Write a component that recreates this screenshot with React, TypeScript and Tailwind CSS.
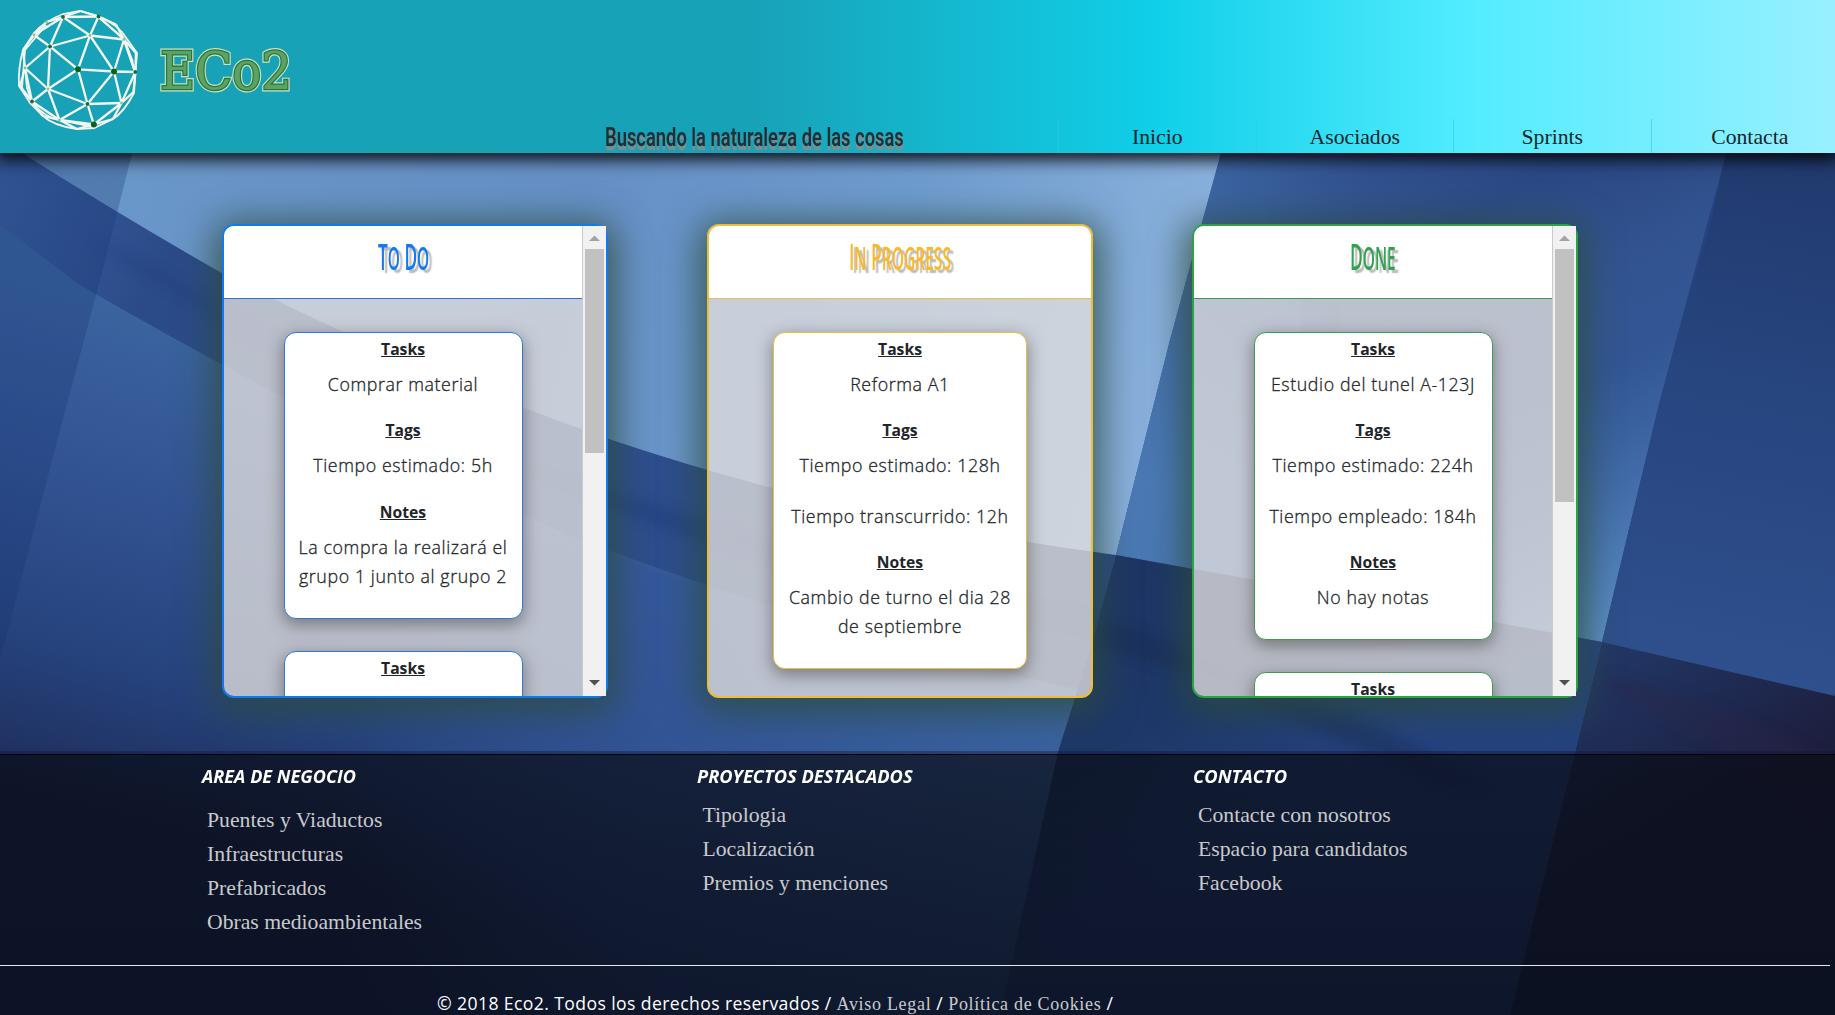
import { useLayoutEffect, useRef, useState } from "react";
import type { ReactNode } from "react";

/* Condenses a run of text horizontally so that it fills a given width. */
function Fit({ width, className = "", children }: { width: number; className?: string; children: ReactNode }) {
  const ref = useRef<HTMLSpanElement>(null);
  const [scale, setScale] = useState(1);
  useLayoutEffect(() => {
    if (ref.current) setScale(width / ref.current.offsetWidth);
  }, [width]);
  return (
    <span className="block overflow-visible" style={{ width }}>
      <span ref={ref} className={`inline-block origin-left whitespace-nowrap ${className}`} style={{ transform: `scaleX(${scale})` }}>
        {children}
      </span>
    </span>
  );
}

function Backdrop() {
  return (
    <svg className="absolute inset-0 h-full w-full" viewBox="0 0 1835 1015" preserveAspectRatio="none" aria-hidden="true">
      <defs>
        <filter id="soft" x="-10%" y="-10%" width="120%" height="120%">
          <feGaussianBlur stdDeviation="6" />
        </filter>
        <linearGradient id="sky" gradientUnits="userSpaceOnUse" x1="100" y1="150" x2="1150" y2="400">
          <stop offset="0" stopColor="#6a97c9" />
          <stop offset=".45" stopColor="#6690c6" />
          <stop offset=".75" stopColor="#6f9ccf" />
          <stop offset="1" stopColor="#89b0dc" />
        </linearGradient>
        <linearGradient id="lowLeft" gradientUnits="userSpaceOnUse" x1="200" y1="330" x2="60" y2="800">
          <stop offset="0" stopColor="#3b649f" />
          <stop offset=".35" stopColor="#325392" />
          <stop offset=".7" stopColor="#26437d" />
          <stop offset="1" stopColor="#1e2c5a" />
        </linearGradient>
        <linearGradient id="lowMid" gradientUnits="userSpaceOnUse" x1="350" y1="0" x2="1080" y2="0">
          <stop offset="0" stopColor="#34599b" stopOpacity="0" />
          <stop offset=".4" stopColor="#33579a" stopOpacity=".75" />
          <stop offset="1" stopColor="#3a639f" />
        </linearGradient>
        <linearGradient id="band" gradientUnits="userSpaceOnUse" x1="0" y1="200" x2="1060" y2="620">
          <stop offset="0" stopColor="#3a5f9f" />
          <stop offset=".15" stopColor="#2b4a88" />
          <stop offset=".6" stopColor="#2d4e8e" />
          <stop offset="1" stopColor="#2a4982" />
        </linearGradient>
        <linearGradient id="pane" gradientUnits="userSpaceOnUse" x1="1180" y1="150" x2="1640" y2="240">
          <stop offset="0" stopColor="#3f69a6" />
          <stop offset=".4" stopColor="#31528f" />
          <stop offset="1" stopColor="#27437f" />
        </linearGradient>
        <linearGradient id="paneGlow" gradientUnits="userSpaceOnUse" x1="1400" y1="250" x2="1600" y2="640">
          <stop offset="0" stopColor="#5d92cb" stopOpacity="0" />
          <stop offset=".45" stopColor="#3d68a9" stopOpacity=".5" />
          <stop offset="1" stopColor="#5c90c8" />
        </linearGradient>
        <linearGradient id="paneLeft" gradientUnits="userSpaceOnUse" x1="1150" y1="200" x2="1150" y2="480">
          <stop offset="0" stopColor="#4f80bb" stopOpacity="0" />
          <stop offset="1" stopColor="#4f80bb" />
        </linearGradient>
        <linearGradient id="right" gradientUnits="userSpaceOnUse" x1="1800" y1="150" x2="1700" y2="680">
          <stop offset="0" stopColor="#213a6e" />
          <stop offset=".45" stopColor="#27457f" />
          <stop offset="1" stopColor="#2f508e" />
        </linearGradient>
        <linearGradient id="deep" gradientUnits="userSpaceOnUse" x1="1150" y1="560" x2="1300" y2="800">
          <stop offset="0" stopColor="#1e3564" />
          <stop offset=".5" stopColor="#1e3869" />
          <stop offset="1" stopColor="#25427e" />
        </linearGradient>
        <linearGradient id="corner" gradientUnits="userSpaceOnUse" x1="1620" y1="640" x2="1720" y2="800">
          <stop offset="0" stopColor="#223766" />
          <stop offset=".5" stopColor="#1f2b53" />
          <stop offset="1" stopColor="#1d1f3f" />
        </linearGradient>
        <linearGradient id="floor" x1="0" y1="754" x2="0" y2="1015" gradientUnits="userSpaceOnUse">
          <stop offset="0" stopColor="#10204a" stopOpacity="0" />
          <stop offset="1" stopColor="#10204a" stopOpacity=".55" />
        </linearGradient>
      </defs>
      <rect width="1835" height="1015" fill="url(#lowLeft)" />
      <path d="M0 225 80 285Q330 430 580 540T1080 690L1000 1015H0Z" fill="url(#lowMid)" />
      <path d="M0 138Q120 215 220 272Q400 365 612 440Q850 520 1116 555L1080 690Q850 640 580 540Q330 430 80 285L0 225Z" fill="url(#band)" />
      <path d="M90 240Q160 265 220 310Q400 420 612 490T1100 605L1092 640Q850 600 612 510Q380 420 90 240Z" fill="#1f3a78" opacity=".4" filter="url(#soft)" />
      <path d="M0 120H1230L1170 340 1116 555Q850 520 612 440Q400 365 220 272Q120 215 22 153Z" fill="url(#sky)" />
      <path d="M138 130 100 280 60 430 0 660V120Z" fill="#16346f" opacity=".28" />
      <path d="M1230 120H1835V696L1602 642 1494 622 1193 569 1116 555 1170 340Z" fill="url(#pane)" />
      <path d="M1230 120 1300 300 1300 588 1116 555 1170 340Z" fill="url(#paneLeft)" opacity=".75" />
      <path d="M1735 120 1660 400 1602 642 1340 595V120Z" fill="url(#paneGlow)" />
      <path d="M1722 170 1710 225 1660 400 1602 642 1835 696V120H1735Z" fill="url(#right)" />
      <path d="M1116 555 1193 569 1494 622 1602 642 1575 752 1510 1015H1000L1058 752 1090 650Z" fill="url(#deep)" />
      <path d="M1100 620Q1260 660 1500 790H1440Q1250 690 1095 645Z" fill="#152850" opacity=".35" filter="url(#soft)" />
      <path d="M1602 642 1835 696V1015H1510L1575 752Z" fill="url(#corner)" />
      <path d="M1600 690Q1730 740 1830 840V760Q1720 700 1607 675Z" fill="#2a2748" opacity=".35" filter="url(#soft)" />
      <rect y="754" width="1835" height="261" fill="url(#floor)" />
    </svg>
  );
}

const NODES: Record<string, [number, number]> = {
  a: [63, 17], b: [80.5, 11], c: [98.5, 16.5], d: [46.5, 22], e: [34, 35], f: [50, 46.5], g: [90, 35.5],
  h: [116, 24.5], i: [124, 39.5], j: [136, 53], k: [25, 68], m: [78, 69.3], l: [23, 50], n: [114, 71.5],
  o: [135.3, 72], p: [20, 86], q: [48, 89], r: [87.5, 104], s: [121.5, 103], t: [32, 101.5], u: [43, 116],
  v: [59.5, 120], w: [93.8, 124.5], x: [113, 119], y: [133.5, 92], z: [77, 129],
};
const EDGES =
  "ab bc ac ad de ae af ag cg gf ef fk fm fq gm gn gi ci hi hc ij in oj oi io no ns nr nm mr mq qk kl le kp pt qt kt qr qv tv tu uv vr vw vz zw rw rs sx xw sy yo os ws".split(" ");

function Logo() {
  return (
    <svg className="h-[153px] w-[605px] shrink-0" viewBox="0 0 605 153" role="img" aria-label="ECo2">
      <g stroke="#f3f7f1" strokeWidth="2.3" fill="none">
        {EDGES.map((e) => (
          <line key={e} x1={NODES[e[0]][0]} y1={NODES[e[0]][1]} x2={NODES[e[1]][0]} y2={NODES[e[1]][1]} />
        ))}
        <path
          strokeWidth="1.8"
          d="M80 11 98 16Q119 25 127 39L137 53 134 93Q124 112 113 119L94 128 77 129Q54 126 43 116L30 103 19 86Q18 68 23 50L34 33Q43 22 63 14Z"
        />
        <path strokeWidth="1.8" d="M46 22Q60 18 63 17M98 17 116 32 124 39 133 62M25 68 27 88 32 102Q45 118 60 120L94 127M22 88 25 50 46 25" />
      </g>
      {["a", "c", "f", "r", "t", "o"].map((n) => (
        <circle key={n} cx={NODES[n][0]} cy={NODES[n][1]} r="1.9" fill="#1d6b33" />
      ))}
      {["m", "n", "w"].map((n) => (
        <circle key={n} cx={NODES[n][0]} cy={NODES[n][1]} r="3" fill="#0d6218" />
      ))}
      {["g", "e", "k", "q", "s", "i", "v", "d"].map((n) => (
        <circle key={n} cx={NODES[n][0]} cy={NODES[n][1]} r="1.4" fill="#9fb98a" />
      ))}
      <g fontFamily="'DejaVu Serif', serif" fontSize="52">
        <text x="160" y="88.5" textLength="132" lengthAdjust="spacingAndGlyphs" fill="#8fbf8c" stroke="#cfe0c2" strokeWidth="5" paintOrder="stroke">
          ECo2
        </text>
        <text x="160" y="88.5" textLength="132" lengthAdjust="spacingAndGlyphs" fill="#5da168" stroke="#237c36" strokeWidth="2.6" paintOrder="stroke" aria-hidden="true">
          ECo2
        </text>
      </g>
    </svg>
  );
}

function Heading({ children }: { children: ReactNode }) {
  return <h3 className="mb-[9px] text-[15.7px] leading-6 font-bold underline">{children}</h3>;
}

function Line({ children }: { children: ReactNode }) {
  return (
    <p className="mb-[19.2px] text-[17.8px] leading-[29.25px] font-light tracking-[0.6px] whitespace-pre text-[#212529] [-webkit-text-stroke:0.3px_#212529] [&+p]:mt-[21px]">
      {children}
    </p>
  );
}

type Task = { task?: string; tags?: string[]; notes?: string };

function TaskCard({ data, className }: { data: Task; className: string }) {
  return (
    <article className={`mx-auto mb-8 shrink-0 rounded-xl border bg-white pt-1 text-center text-[#212529] shadow-[0_5px_16px_1px_rgba(60,55,50,0.5)] ${className}`}>
      <Heading>Tasks</Heading>
      {data.task && <Line>{data.task}</Line>}
      {data.tags && <Heading>Tags</Heading>}
      {data.tags?.map((t) => <Line key={t}>{t}</Line>)}
      {data.notes && <Heading>Notes</Heading>}
      {data.notes && <Line>{data.notes}</Line>}
    </article>
  );
}

function Scrollbar({ thumb }: { thumb: string }) {
  return (
    <div className="z-10 flex w-6 shrink-0 flex-col items-center border-l border-[#c6cad2] bg-[#f1f1f1]">
      <svg className="h-[23px] w-[11px] shrink-0" viewBox="0 0 11 23"><path d="M0 15 5.5 9.500 11 15Z" fill="#a3a3a3" /></svg>
      <div className={`w-[19px] bg-[#c1c1c1] ${thumb}`} />
      <svg className="mt-auto h-[23px] w-[11px] shrink-0" viewBox="0 0 11 23"><path d="M0 7 5.5 12.5 11 7Z" fill="#505050" /></svg>
    </div>
  );
}

type ColumnProps = {
  title: ReactNode; titleWidth: number; frame: string; rule: string; color: string; card: string;
  tasks: { data: Task; height: string }[]; thumb?: string;
};

function Column({ title, titleWidth, frame, rule, color, card, tasks, thumb }: ColumnProps) {
  return (
    <section className={`flex h-[474px] w-[386px] shrink-0 rounded-xl border-2 bg-[rgba(225,222,222,0.79)] shadow-[0_6px_36px_8px_rgba(45,76,60,0.8)] ${frame}`}>
      <div className={`flex min-w-0 grow flex-col overflow-hidden rounded-l-[10px] ${thumb ? "" : "rounded-r-[10px]"}`}>
        <header className={`flex h-[73px] shrink-0 justify-center border-b bg-white pt-[9px] ${rule}`}>
          <Fit width={titleWidth} className={`text-[36px] leading-[44px] font-semibold [font-family:'Open_Sans',sans-serif] [text-shadow:7px_3px_2px_#b9b9b9] ${color}`}>
            {title}
          </Fit>
        </header>
        <div className="flex grow flex-col overflow-hidden pt-[33px]">
          {tasks.map((t, i) => (
            <TaskCard key={i} data={t.data} className={`${card} ${t.height}`} />
          ))}
        </div>
      </div>
      {thumb && <Scrollbar thumb={thumb} />}
    </section>
  );
}

/* Tall capital followed by slightly smaller capitals. */
function SmallCaps({ words }: { words: string[] }) {
  return (
    <>
      {words.map((w, i) => (
        <span key={w}>
          {i > 0 && " "}
          {w[0]}
          <span className="text-[32px]">{w.slice(1).toUpperCase()}</span>
        </span>
      ))}
    </>
  );
}

function FooterColumn({ title, titleWidth, links, first }: { title: string; titleWidth: number; links: string[]; first?: boolean }) {
  return (
    <div className="w-[495.5px] shrink-0">
      <h4 className="h-[42px] pt-[10px] text-[17px] leading-6 font-bold text-white italic">
        <Fit width={titleWidth}>{title}</Fit>
      </h4>
      <ul className={`pl-[5.5px] text-[21.7px] leading-[34px] text-[#c9cacd] [font-family:'Liberation_Serif',serif] ${first ? "pt-[6px]" : "pt-[1px]"}`}>
        {links.map((l) => <li key={l}>{l}</li>)}
      </ul>
    </div>
  );
}

export default function App() {
  return (
    <div className="relative flex h-[1015px] w-full flex-col overflow-hidden bg-[#1e2c5a] [font-family:'Open_Sans',sans-serif]">
      <Backdrop />
      <header className="relative z-10 flex h-[153px] shrink-0 items-end bg-[linear-gradient(90deg,#18a2b8_0%,#18a2b8_41%,#10cfe8_63%,#52ecff_80%,#98f0ff_100%)] shadow-[0_2px_16px_4px_rgba(0,0,0,0.95)]">
        <Logo />
        <div className="w-[453px] shrink-0">
          <Fit width={299} className="text-[25px] leading-[31px] font-semibold text-[#1c3038] [font-family:'Roboto',sans-serif] [text-shadow:0_4px_1px_#8b8b8b]">
            Buscando la naturaleza de las cosas
          </Fit>
        </div>
        <nav className="flex h-[34px] shrink-0">
          {["Inicio", "Asociados", "Sprints", "Contacta"].map((n) => (
            <a key={n} className="w-[197.5px] border-l border-[#30c8f0]/60 text-center text-[21.7px] leading-9 text-[#14252b] [font-family:'Liberation_Serif',serif]">
              {n}
            </a>
          ))}
        </nav>
      </header>
      <main className="relative flex h-[601px] shrink-0 gap-[99px] pt-[71px] pl-[222px]">
        <Column
          title={<SmallCaps words={["To", "Do"]} />} titleWidth={51} frame="border-[#1279ec]" rule="border-[#2a76cf]" color="text-[#1479ee]"
          card="w-[239px] border-[#2a7ad6]" thumb="h-[204px]"
          tasks={[
            { data: { task: "Comprar material", tags: ["Tiempo estimado: 5h"], notes: "La compra la realizará el\ngrupo 1 junto al grupo 2" }, height: "h-[287px]" },
            { data: {}, height: "h-[120px]" },
          ]}
        />
        <Column
          title={<SmallCaps words={["In", "Progress"]} />} titleWidth={102} frame="border-[#ecbd35]" rule="border-[#e6be52]" color="text-[#fbb829]"
          card="w-[254px] border-[#eabc41]"
          tasks={[
            { data: { task: "Reforma A1", tags: ["Tiempo estimado: 128h", "Tiempo transcurrido: 12h"], notes: "Cambio de turno el dia 28\nde septiembre" }, height: "h-[337px]" },
          ]}
        />
        <Column
          title={<SmallCaps words={["Done"]} />} titleWidth={46} frame="border-[#2fa049]" rule="border-[#3b9a55]" color="text-[#32a150]"
          card="w-[239px] border-[#3a9d52]" thumb="h-[253px]"
          tasks={[
            { data: { task: "Estudio del tunel A-123J", tags: ["Tiempo estimado: 224h", "Tiempo empleado: 184h"], notes: "No hay notas" }, height: "h-[308px]" },
            { data: {}, height: "h-[120px]" },
          ]}
        />
      </main>
      <footer className="relative flex grow flex-col border-t border-black bg-[rgba(8,12,20,0.7)] shadow-[0_-3px_0_rgba(15,20,60,0.4)]">
        <div className="flex h-[210px] shrink-0 pl-[201.5px]">
          <FooterColumn first title="AREA DE NEGOCIO" titleWidth={154} links={["Puentes y Viaductos", "Infraestructuras", "Prefabricados", "Obras medioambientales"]} />
          <FooterColumn title="PROYECTOS DESTACADOS" titleWidth={216} links={["Tipologia", "Localización", "Premios y menciones"]} />
          <FooterColumn title="CONTACTO" titleWidth={94} links={["Contacte con nosotros", "Espacio para candidatos", "Facebook"]} />
        </div>
        <hr className="w-[1830px] border-[#e4e6f2]" />
        <p className="pt-[23px] pl-[437px] text-[17.6px] leading-7 tracking-[0.4px] whitespace-nowrap text-white">
          © 2018 Eco2. Todos los derechos reservados /{" "}
          <a className="text-[18px] tracking-[0.7px] text-[#c9cacd] [font-family:'Liberation_Serif',serif]">Aviso Legal</a> /{" "}
          <a className="text-[18px] tracking-[0.7px] text-[#c9cacd] [font-family:'Liberation_Serif',serif]">Política de Cookies</a> /
        </p>
      </footer>
    </div>
  );
}
